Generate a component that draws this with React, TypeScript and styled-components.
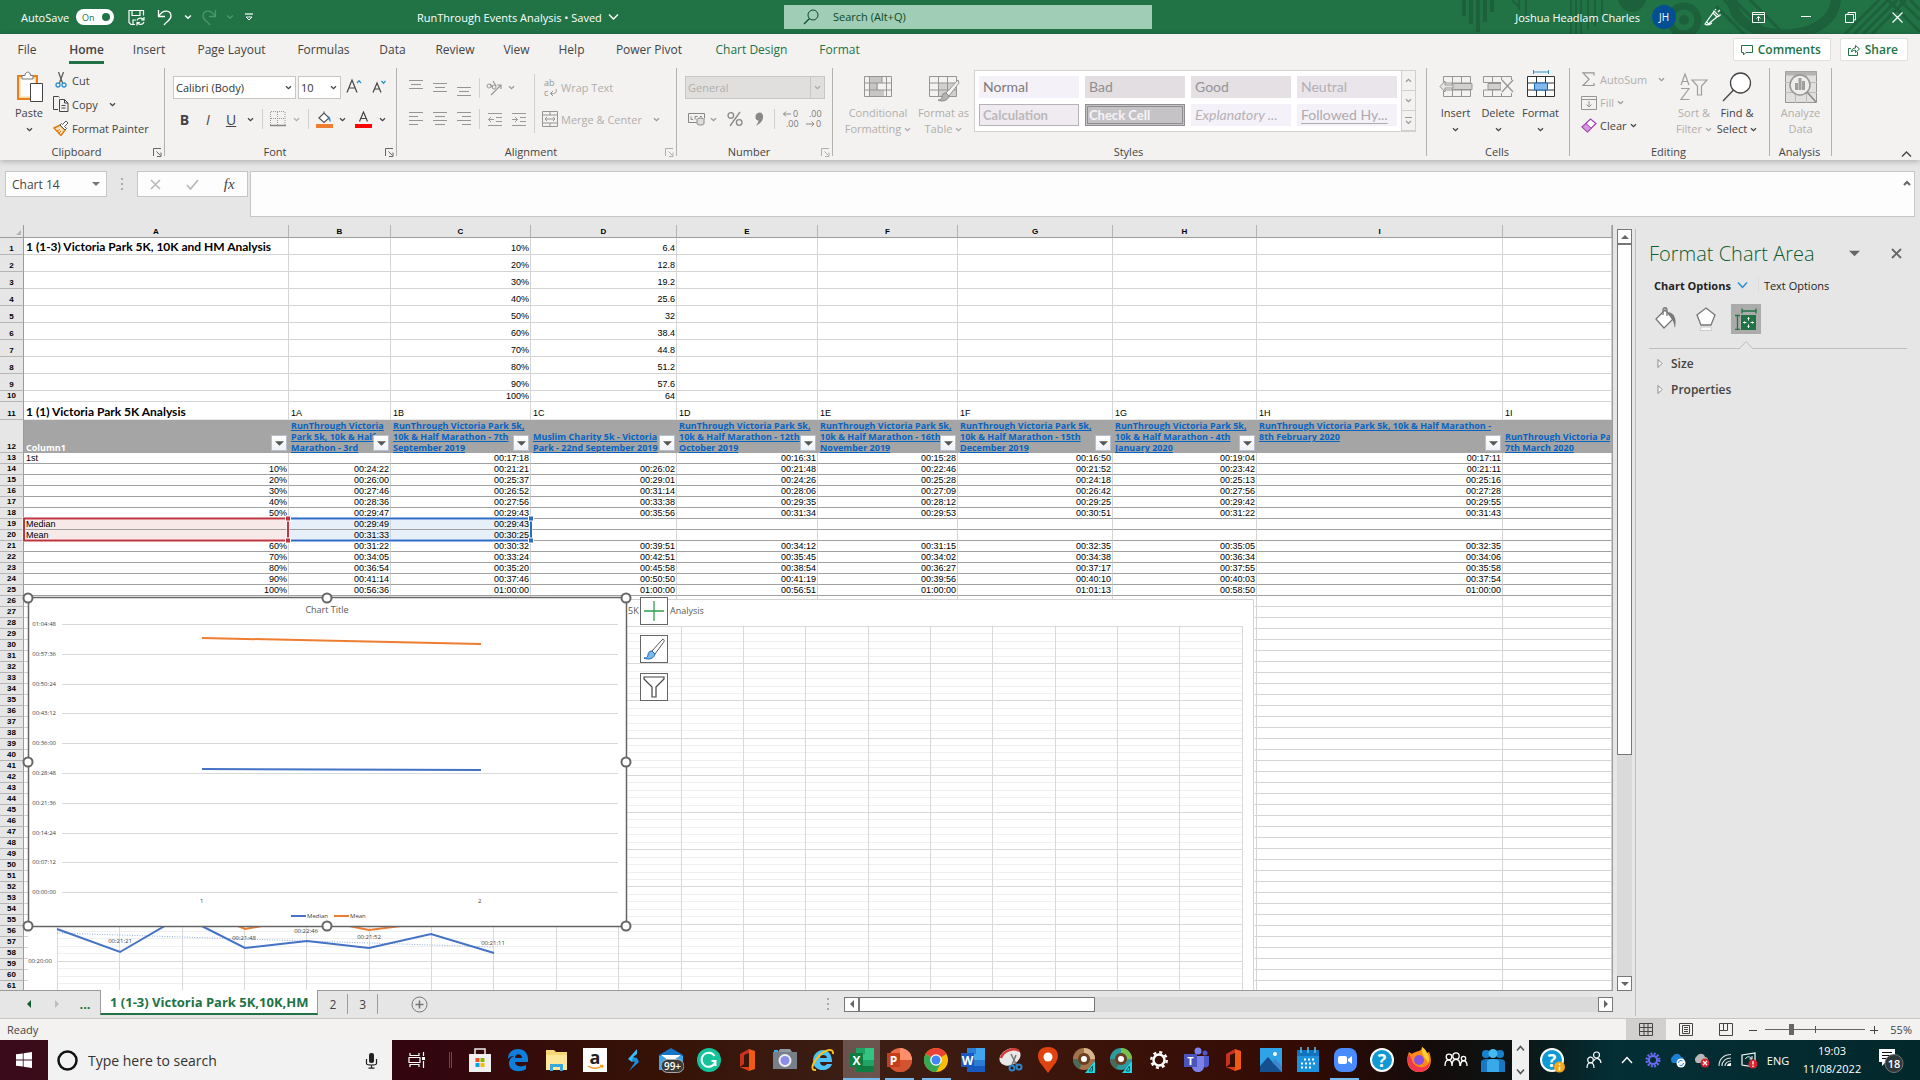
import React from "react";
import styled, { createGlobalStyle, css } from "styled-components";

/* ---------- shared values ---------- */
const ui = '"Open Sans", "Noto Sans", sans-serif';
const cellFont = '"Liberation Sans", Arial, sans-serif';
const calibri = 'Lato, "Open Sans", sans-serif';
const green = "#217346";
const ink = "#444444";
const dim = "#b1aeac";

const Global = createGlobalStyle`
  * { box-sizing: border-box; }
  body { margin: 0; background: #e6e6e6; font-family: ${ui}; font-size: 11px; color: ${ink}; }
  button { font: inherit; color: inherit; background: none; border: 0; padding: 0; margin: 0; }
  input, textarea, select { font: inherit; color: inherit; margin: 0; border-radius: 0; outline: 0; }
  svg { display: block; flex: none; }
`;

const Window = styled.div`
  display: flex;
  flex-direction: column;
  height: 100vh;
  min-width: 1280px;
  overflow: hidden;
`;

/* ---------- small drawings ---------- */
type IcoProps = { w?: number; h?: number; box?: string; children: React.ReactNode };
const Ico = ({ w = 16, h = 16, box, children }: IcoProps) => (
  <svg width={w} height={h} viewBox={box ?? `0 0 ${w} ${h}`} fill="none" aria-hidden="true">
    {children}
  </svg>
);
const Chev = ({ c = ink, w = 7 }: { c?: string; w?: number }) => (
  <Ico w={w} h={w} box="0 0 7 7">
    <path d="M1 2.2l2.5 2.4L6 2.2" stroke={c} strokeWidth="1.3" />
  </Ico>
);
const Tri = ({ dir, c = "#666", s = 8 }: { dir: "u" | "d" | "l" | "r"; c?: string; s?: number }) => {
  const d = { u: "M0 6L4 2l4 4z", d: "M0 2h8L4 6z", l: "M6 0v8L2 4z", r: "M2 0v8l4-4z" }[dir];
  return (
    <Ico w={s} h={s} box="0 0 8 8">
      <path d={d} fill={c} />
    </Ico>
  );
};

/* ---------- title bar ---------- */
const TitleBar = styled.header`
  position: relative;
  display: grid;
  grid-template-columns: 1fr 368px 1fr;
  align-items: center;
  height: 34px;
  flex: none;
  padding-left: 16px;
  background: ${green};
  color: #fff;
`;
const TitleArt = styled.div`
  position: absolute;
  right: 0;
  top: 0;
`;
const TitleLeft = styled.div`
  display: flex;
  align-items: center;
  height: 100%;
  padding-left: 5px;
`;
const AutoSave = styled.label`
  display: flex;
  align-items: center;
  gap: 7px;
  width: 107px;
`;
const Toggle = styled.span`
  display: flex;
  align-items: center;
  justify-content: space-between;
  width: 38px;
  height: 16px;
  padding: 0 4px 0 6px;
  border-radius: 8px;
  background: #fff;
  color: ${green};
  font-size: 9px;
  &::after {
    content: "";
    width: 8px;
    height: 8px;
    border-radius: 50%;
    background: ${green};
  }
`;
const HiddenCheck = styled.input`
  appearance: none;
  width: 0;
  height: 0;
  position: absolute;
`;
const QuickBtn = styled.button<{ $w: number }>`
  display: flex;
  align-items: center;
  justify-content: center;
  width: ${(p) => p.$w}px;
  height: 24px;
`;
const DocName = styled.button`
  display: flex;
  align-items: center;
  gap: 6px;
  margin: 0 auto 0 153px;
  white-space: nowrap;
`;
const SearchBox = styled.label`
  display: flex;
  align-items: center;
  height: 24px;
  margin-bottom: 1px;
  padding-left: 19px;
  gap: 14px;
  background: #9fcdb5;
  color: #0c4a26;
`;
const SearchInput = styled.input`
  flex: 1;
  min-width: 0;
  border: 0;
  padding: 0;
  background: transparent;
  &::placeholder {
    color: #0c4a26;
    opacity: 1;
  }
`;
const TitleRight = styled.div`
  position: relative;
  display: flex;
  align-items: center;
  justify-content: flex-end;
`;
const Avatar = styled.span`
  display: grid;
  place-items: center;
  width: 24px;
  height: 24px;
  margin: 0 16px 0 12px;
  border-radius: 50%;
  background: #024f94;
  font-size: 10px;
`;

/* ---------- ribbon ---------- */
const Ribbon = styled.section`
  position: relative;
  z-index: 2;
  flex: none;
  background: #f3f2f1;
  box-shadow: 0 1px 6px rgba(0, 0, 0, 0.28);
`;
const TabRow = styled.nav`
  display: flex;
  align-items: center;
  height: 34px;
  padding: 0 12px 3px 7px;
`;
const Tab = styled.button<{ $w: number; $tone?: string; $on?: boolean }>`
  width: ${(p) => p.$w}px;
  height: 28px;
  font-size: 12px;
  color: ${(p) => p.$tone ?? ink};
  font-weight: ${(p) => (p.$on ? 600 : 400)};
  white-space: nowrap;
  span {
    display: inline-block;
    padding-bottom: 1px;
    margin-top: 4px;
    border-bottom: 3px solid ${(p) => (p.$on ? green : "transparent")};
    line-height: 20px;
  }
`;
const Spacer = styled.div`
  flex: 1;
`;
const PillBtn = styled.button`
  display: flex;
  align-items: center;
  gap: 5px;
  height: 23px;
  margin-left: 9px;
  padding: 0 9px 0 7px;
  border: 1px solid #e1dfdd;
  border-radius: 2px;
  background: #fff;
  color: ${green};
  font-size: 12px;
  font-weight: 600;
`;
const Groups = styled.div`
  display: flex;
  height: 92px;
`;
const Group = styled.div<{ $w: number }>`
  display: flex;
  flex-direction: column;
  width: ${(p) => p.$w}px;
  flex: none;
`;
const GroupBody = styled.div<{ $pad?: number; $end?: number }>`
  display: flex;
  height: 76px;
  padding-left: ${(p) => p.$pad ?? 0}px;
  padding-right: ${(p) => p.$end ?? 0}px;
`;
const GroupFoot = styled.div`
  display: flex;
  align-items: center;
  height: 16px;
  padding-right: 2px;
  line-height: 16px;
  span {
    flex: 1;
    text-align: center;
  }
`;
const GroupRule = styled.div`
  width: 1px;
  height: 88px;
  flex: none;
  background: #b3b0ad;
`;
const Rows = styled.div<{ $w?: number; $pad?: number }>`
  display: grid;
  grid-template-rows: 23px 22px;
  row-gap: 9px;
  align-content: start;
  padding-top: 8px;
  padding-left: ${(p) => p.$pad ?? 0}px;
  width: ${(p) => (p.$w ? `${p.$w}px` : "auto")};
`;
const Line = styled.div`
  display: flex;
  align-items: center;
`;
const Tool = styled.button<{ $w: number }>`
  display: flex;
  align-items: center;
  justify-content: center;
  width: ${(p) => p.$w}px;
  height: 22px;
  font-size: 14px;
`;
const Sep = styled.span<{ $w: number }>`
  display: flex;
  justify-content: center;
  width: ${(p) => p.$w}px;
  &::after {
    content: "";
    width: 1px;
    height: 20px;
    background: #d2d0ce;
  }
`;
const TallSep = styled.span`
  width: 1px;
  height: 59px;
  margin-top: 6px;
  background: #d2d0ce;
`;
const LargeBtn = styled.button<{ $w: number; $off?: boolean }>`
  display: flex;
  flex-direction: column;
  align-items: center;
  width: ${(p) => p.$w}px;
  flex: none;
  color: ${(p) => (p.$off ? dim : ink)};
  line-height: 16px;
  white-space: nowrap;
`;
const LargeIcon = styled.span`
  display: grid;
  place-items: center;
  height: 37px;
`;
const Caption = styled.span`
  display: flex;
  align-items: center;
  gap: 3px;
  min-height: 16px;
`;
const SmallStack = styled.div<{ $row: number; $gap: number }>`
  display: grid;
  grid-auto-rows: ${(p) => p.$row}px;
  margin-left: ${(p) => p.$gap}px;
`;
const SmallBtn = styled.button<{ $off?: boolean }>`
  display: flex;
  align-items: center;
  gap: 3px;
  color: ${(p) => (p.$off ? dim : ink)};
  white-space: nowrap;
`;
const ChevPad = styled.span`
  padding-left: 8px;
`;
const PickerPair = styled.div`
  display: flex;
  gap: 2px;
`;
const Picker = styled.label<{ $w: number; $off?: boolean }>`
  display: grid;
  align-items: center;
  width: ${(p) => p.$w}px;
  height: 23px;
  border: 1px solid #c8c6c4;
  background: ${(p) => (p.$off ? "#e1dfdd" : "#fff")};
  color: ${(p) => (p.$off ? dim : "#333")};
  > * {
    grid-area: 1 / 1;
  }
`;
const PickerSelect = styled.select`
  appearance: none;
  width: 100%;
  height: 21px;
  border: 0;
  padding: 0 2px;
  background: transparent;
`;
const PickerArrow = styled.span<{ $line?: boolean }>`
  display: grid;
  place-items: center;
  justify-self: end;
  width: 14px;
  height: 21px;
  pointer-events: none;
  border-left: 1px solid ${(p) => (p.$line ? "#c8c6c4" : "transparent")};
`;
const Gallery = styled.div`
  display: flex;
  height: 62px;
  margin-top: 2px;
  border: 1px solid #d2d0ce;
  background: #fff;
`;
const GalleryGrid = styled.div`
  display: grid;
  grid-template-columns: repeat(4, 100px);
  grid-template-rows: 22px 22px;
  gap: 6px;
  padding: 5px 4px;
`;
type StyleKind = "plain" | "calc" | "check" | "note" | "link";
const StyleCell = styled.button<{ $bg: string; $c: string; $kind: StyleKind }>`
  padding: 0 4px;
  background: ${(p) => p.$bg};
  color: ${(p) => p.$c};
  font-family: ${calibri};
  font-size: 14px;
  line-height: 16px;
  text-align: left;
  white-space: nowrap;
  ${(p) => p.$kind === "calc" && css`border: 1px solid #b5b2b5; padding: 0 3px; font-weight: 700; font-size: 13px;`}
  ${(p) => p.$kind === "check" && css`border: 3px double #8f8d8f; padding: 0 1px; font-weight: 700; font-size: 13px;`}
  ${(p) => p.$kind === "note" && css`font-style: italic;`}
  ${(p) => p.$kind === "link" && css`text-decoration: underline; text-underline-offset: 3px;`}
`;
const GallerySide = styled.div`
  display: grid;
  grid-template-rows: repeat(3, 1fr);
  width: 14px;
  background: #f3f2f1;
  border-left: 1px solid #d2d0ce;
  button {
    display: grid;
    place-items: center;
    border-bottom: 1px solid #d2d0ce;
  }
`;
const Collapse = styled.button`
  align-self: flex-end;
  margin: 0 8px 2px 0;
`;

const Launcher = ({ c = "#666" }: { c?: string }) => (
  <Ico w={9} h={9}>
    <path d="M.5 8V.5H8M3.5 3.5l4 4M8 4.500V8.500H4" stroke={c} />
  </Ico>
);
const Lines = ({ rows, c = "#979593" }: { rows: [number, number, number][]; c?: string }) => (
  <Ico w={16} h={18}>
    {rows.map(([x, y, w]) => (
      <path key={y} d={`M${x} ${y}.5h${w}`} stroke={c} />
    ))}
  </Ico>
);
const gridPath = "M1.500 1.500h27v20h-27zM1.500 8h27M1.500 15h27M10.500 1.500v20M19.500 1.500v20";

function RibbonBar() {
  const tabs: [string, number][] = [
    ["File", 40], ["Home", 79], ["Insert", 46], ["Page Layout", 119], ["Formulas", 65], ["Data", 73],
    ["Review", 52], ["View", 71], ["Help", 39], ["Power Pivot", 116], ["Chart Design", 89], ["Format", 87],
  ];
  return (
    <Ribbon aria-label="Ribbon">
      <TabRow>
        {tabs.map(([t, w]) => (
          <Tab key={t} $w={w} $on={t === "Home"} $tone={t === "Chart Design" || t === "Format" ? green : undefined}>
            <span>{t}</span>
          </Tab>
        ))}
        <Spacer />
        <PillBtn>
          <Ico w={12} h={12}>
            <path d="M.5 1.500h11v7H5l-2.500 2.500V8.500h-2z" stroke={green} />
          </Ico>
          Comments
        </PillBtn>
        <PillBtn>
          <Ico w={12} h={12}>
            <path d="M3 4.500H.5v7h9V8M3.500 8c0-3 2-4 4-4V1.500l4 3.500-4 3.500V6.200c-2 0-3 .5-4 1.800z" stroke={green} />
          </Ico>
          Share
        </PillBtn>
      </TabRow>
      <Groups>
        <Group $w={164}>
          <GroupBody $pad={12}>
            <LargeBtn $w={34}>
              <LargeIcon>
                <Ico w={30} h={32}>
                  <path d="M4 5h19v23H4z" fill="#fbd9a0" stroke="#e8811c" strokeWidth="2" />
                  <path d="M6.500 7.500h14v18h-14z" fill="#fdfdfd" />
                  <path d="M8 8V4.500h3C11 0 16.500 0 16.500 4.500H19V8z" fill="#fff" stroke="#777" />
                  <path d="M16.500 12.500h12v18h-12z" fill="#fff" stroke="#444" />
                </Ico>
              </LargeIcon>
              <Caption>Paste</Caption>
              <Caption><Chev /></Caption>
            </LargeBtn>
            <SmallStack $row={24} $gap={7}>
              <SmallBtn>
                <Ico>
                  <path d="M5.500 0l4 11M10.500 0l-4 11" stroke="#555" strokeWidth="1.200" />
                  <circle cx="5" cy="13" r="2" stroke="#2c8fd0" strokeWidth="1.300" />
                  <circle cx="11" cy="13" r="2" stroke="#2c8fd0" strokeWidth="1.300" />
                </Ico>
                Cut
              </SmallBtn>
              <SmallBtn>
                <Ico>
                  <path d="M5 13.500H.5v-13h5l1 1M6.500 3.500h5l3.500 3.500v8.500H6.500zM11.500 3.500V7H15M8.500 9.500h4M8.500 12h4" stroke="#444" />
                </Ico>
                Copy<ChevPad><Chev /></ChevPad>
              </SmallBtn>
              <SmallBtn>
                <Ico>
                  <path d="M1 8l6-3 5 5-4 5.500z" fill="#fce2b4" stroke="#e07a10" strokeWidth="1.400" />
                  <path d="M4 11l3-1.500M6 13l2-2" stroke="#e07a10" />
                  <path d="M7 5l5 5 1.500-1.500-2-2L15 3l-2-2-3.500 3.500-1-1z" fill="#fff" stroke="#555" />
                </Ico>
                Format Painter
              </SmallBtn>
            </SmallStack>
          </GroupBody>
          <GroupFoot><span>Clipboard</span><Launcher /></GroupFoot>
        </Group>
        <GroupRule />
        <Group $w={231}>
          <GroupBody $pad={1}>
            <Rows $pad={7}>
              <Line>
                <PickerPair>
                  <Picker $w={123}>
                    <PickerSelect defaultValue="c" aria-label="Font name"><option value="c">Calibri (Body)</option></PickerSelect>
                    <PickerArrow><Chev /></PickerArrow>
                  </Picker>
                  <Picker $w={43}>
                    <PickerSelect defaultValue="10" aria-label="Font size"><option value="10">10</option></PickerSelect>
                    <PickerArrow><Chev /></PickerArrow>
                  </Picker>
                </PickerPair>
                <Tool $w={26} aria-label="Increase font size">
                  <Ico w={16} h={20}>
                    <path d="M1 14.500L6 2l5 12.500M2.800 10h6.400" stroke="#444" strokeWidth="1.200" />
                    <path d="M11 5l2-2.200L15 5" stroke="#2c8fd0" strokeWidth="1.300" />
                  </Ico>
                </Tool>
                <Tool $w={24} aria-label="Decrease font size">
                  <Ico w={14} h={20}>
                    <path d="M1 14.500L5 5l4 9.500M2.500 11h5" stroke="#444" strokeWidth="1.200" />
                    <path d="M9.500 3l2 2.200L13.500 3" stroke="#2c8fd0" strokeWidth="1.300" />
                  </Ico>
                </Tool>
              </Line>
              <Line>
                <Tool $w={23} aria-label="Bold"><b>B</b></Tool>
                <Tool $w={24} aria-label="Italic"><i>I</i></Tool>
                <Tool $w={22} aria-label="Underline"><u>U</u></Tool>
                <Tool $w={16} aria-label="Underline options"><Chev /></Tool>
                <Sep $w={8} />
                <Tool $w={24} aria-label="Borders">
                  <Ico>
                    <path d="M.5 1v13M7.500 1v13M15 1v13M1 .5h14M1 7.500h14" stroke="#999" strokeDasharray="1 1" />
                    <path d="M0 14.500h16" stroke="#888" strokeWidth="1.500" />
                  </Ico>
                </Tool>
                <Tool $w={12} aria-label="Border options"><Chev c={dim} /></Tool>
                <Sep $w={12} />
                <Tool $w={20} aria-label="Fill color">
                  <Ico w={17} h={17}>
                    <path d="M3 7l5-5 5 5-5 4.500zM8 2V.5" fill="#fff" stroke="#555" strokeWidth="1.200" />
                    <path d="M12 5c2 .5 3 3 2.500 6-1-.5-2-2-2-4z" fill="#2c8fd0" />
                    <path d="M0 13h17v4H0z" fill="#ed7d31" />
                  </Ico>
                </Tool>
                <Tool $w={16} aria-label="Fill options"><Chev /></Tool>
                <Tool $w={26} aria-label="Font color">
                  <Ico w={17} h={17}>
                    <path d="M4.500 10.500L8.500 1l4 9.500M6 7.500h5" stroke="#444" strokeWidth="1.200" />
                    <path d="M0 13h17v4H0z" fill="#fb0505" />
                  </Ico>
                </Tool>
                <Tool $w={12} aria-label="Font color options"><Chev /></Tool>
              </Line>
            </Rows>
          </GroupBody>
          <GroupFoot><span>Font</span><Launcher /></GroupFoot>
        </Group>
        <GroupRule />
        <Group $w={279}>
          <GroupBody $pad={7}>
            <Rows $w={130}>
              <Line>
                <Tool $w={24} aria-label="Top align"><Lines rows={[[1, 1, 14], [3, 5, 10], [1, 9, 14]]} /></Tool>
                <Tool $w={24} aria-label="Middle align"><Lines rows={[[1, 4, 14], [3, 8, 10], [1, 12, 14]]} /></Tool>
                <Tool $w={24} aria-label="Bottom align"><Lines rows={[[1, 8, 14], [3, 12, 10], [1, 16, 14]]} /></Tool>
                <Sep $w={6} />
                <Tool $w={24} aria-label="Orientation">
                  <Ico>
                    <circle cx="3" cy="6" r="2" stroke="#999" />
                    <circle cx="8" cy="7" r="2" stroke="#999" />
                    <path d="M4 4l3 3.500M7 1l3 5M5 15L15 5M11 5h4v4" stroke="#999" strokeWidth="1.200" />
                  </Ico>
                </Tool>
                <Tool $w={10} aria-label="Orientation options"><Chev c="#999" /></Tool>
              </Line>
              <Line>
                <Tool $w={24} aria-label="Align left"><Lines rows={[[1, 2, 14], [1, 6, 9], [1, 10, 14], [1, 14, 9]]} /></Tool>
                <Tool $w={24} aria-label="Center"><Lines rows={[[1, 2, 14], [3, 6, 10], [1, 10, 14], [3, 14, 10]]} /></Tool>
                <Tool $w={24} aria-label="Align right"><Lines rows={[[1, 2, 14], [6, 6, 9], [1, 10, 14], [6, 14, 9]]} /></Tool>
                <Sep $w={6} />
                <Tool $w={26} aria-label="Decrease indent">
                  <Ico h={15}>
                    <path d="M1 1.500h14M9 5.500h6M9 9.500h6M1 13.500h14M7 7.500H1.500M4 5L1.500 7.500 4 10" stroke="#999" />
                  </Ico>
                </Tool>
                <Tool $w={22} aria-label="Increase indent">
                  <Ico h={15}>
                    <path d="M1 1.500h14M9 5.500h6M9 9.500h6M1 13.500h14M1 7.500h5.500M4 5l2.500 2.500L4 10" stroke="#999" />
                  </Ico>
                </Tool>
              </Line>
            </Rows>
            <TallSep />
            <Rows $pad={7}>
              <SmallBtn $off>
                <Ico h={22}>
                  <text x="2" y="9" fontSize="9" fill="#979593" fontFamily="Open Sans">ab</text>
                  <text x="2" y="19" fontSize="9" fill="#979593" fontFamily="Open Sans">c</text>
                  <path d="M14 12c1 4-1 5-5 4.500M11 14l-2.500 2.500L11 19" stroke="#979593" />
                </Ico>
                Wrap Text
              </SmallBtn>
              <SmallBtn $off>
                <Ico>
                  <path d="M.5.5h15v15H.5zM.5 4h15M.5 12h15M8 .5V4M8 12v3.500M3 8h10M5 6L3 8l2 2M11 6l2 2-2 2" stroke="#979593" />
                </Ico>
                Merge &amp; Center<ChevPad><Chev c="#999" /></ChevPad>
              </SmallBtn>
            </Rows>
          </GroupBody>
          <GroupFoot><span>Alignment</span><Launcher c="#b0aeac" /></GroupFoot>
        </Group>
        <GroupRule />
        <Group $w={155}>
          <GroupBody $pad={8}>
            <Rows>
              <Line>
                <Picker $w={140} $off>
                  <PickerSelect defaultValue="g" aria-label="Number format"><option value="g">General</option></PickerSelect>
                  <PickerArrow $line><Chev c="#aaa" /></PickerArrow>
                </Picker>
              </Line>
              <Line>
                <Tool $w={22} aria-label="Accounting format">
                  <Ico w={17} h={14}>
                    <path d="M.5 1.500h16v5M.5 1.500v9h8M3 4.500v3h2M7 7.500v-3h2.500M12 4.500h2" stroke="#8a8886" />
                    <ellipse cx="12.500" cy="7.500" rx="3.500" ry="1.500" fill="#ddd" stroke="#8a8886" />
                    <path d="M9 7.500v4c0 2 7 2 7 0v-4" fill="#ddd" stroke="#8a8886" />
                  </Ico>
                </Tool>
                <Tool $w={12} aria-label="Accounting options"><Chev c="#999" /></Tool>
                <Tool $w={32} aria-label="Percent style">
                  <Ico>
                    <circle cx="3.800" cy="4.500" r="2.800" stroke="#8a8886" strokeWidth="1.300" />
                    <circle cx="12.200" cy="11.500" r="2.800" stroke="#8a8886" strokeWidth="1.300" />
                    <path d="M13 1L3 15" stroke="#8a8886" strokeWidth="1.300" />
                  </Ico>
                </Tool>
                <Tool $w={16} aria-label="Comma style">
                  <Ico w={9} h={14}>
                    <path d="M4.500.5c5 0 5.500 9-3 13-.8-.4 2-2.500 2-5C-1 8.500-.5.5 4.500.5z" fill="#8a8886" />
                  </Ico>
                </Tool>
                <Sep $w={14} />
                <Tool $w={18} aria-label="Increase decimal">
                  <Ico w={17} h={22}>
                    <text x="11" y="9" fontSize="9" fill="#7c7a78" fontFamily="Open Sans">0</text>
                    <text x="4" y="19" fontSize="9" fill="#7c7a78" fontFamily="Open Sans">.00</text>
                    <path d="M9 6H1.500M4 3.500L1.500 6 4 8.500" stroke="#8a8886" />
                  </Ico>
                </Tool>
                <Tool $w={29} aria-label="Decrease decimal">
                  <Ico w={17} h={22}>
                    <text x="4" y="9" fontSize="9" fill="#7c7a78" fontFamily="Open Sans">.00</text>
                    <text x="11" y="19" fontSize="9" fill="#7c7a78" fontFamily="Open Sans">0</text>
                    <path d="M1 16h8M6.500 13.500L9 16l-2.500 2.500" stroke="#8a8886" />
                  </Ico>
                </Tool>
              </Line>
            </Rows>
          </GroupBody>
          <GroupFoot><span>Number</span><Launcher c="#b0aeac" /></GroupFoot>
        </Group>
        <GroupRule />
        <Group $w={593}>
          <GroupBody $pad={10}>
            <LargeBtn $w={70} $off>
              <LargeIcon>
                <Ico w={30} h={23}>
                  <path d="M6 1.500h13V8H6zM6 8h9v7H6zM6 15h15v6.500H6z" fill="#c8c6c4" />
                  <path d="M1.500 1.500h27v20h-27zM1.500 8h27M1.500 15h27M6.500 1.500v20M23.500 1.500v20M19 1.500V8M14 8v7" stroke="#979593" />
                </Ico>
              </LargeIcon>
              <Caption>Conditional</Caption>
              <Caption>Formatting<Chev c="#aaa" /></Caption>
            </LargeBtn>
            <LargeBtn $w={61} $off>
              <LargeIcon>
                <Ico w={32} h={30}>
                  <g transform="translate(0 3)">
                    <path d="M10.500 8h18v13.500h-18z" fill="#d2d0ce" />
                    <path d={gridPath} stroke="#979593" />
                  </g>
                  <path d="M30 8L18 21l3 3L31 11z" fill="#f3f2f1" stroke="#979593" />
                  <path d="M18 21c-3 0-4 2-4 4s-2 3-4 3c4 2 10 1 11-4z" fill="#b5b3b1" stroke="#8a8886" />
                </Ico>
              </LargeIcon>
              <Caption>Format as</Caption>
              <Caption>Table<Chev c="#aaa" /></Caption>
            </LargeBtn>
            <Gallery>
              <GalleryGrid>
                <StyleCell $bg="#f5f1f8" $c="#7c7a7c" $kind="plain">Normal</StyleCell>
                <StyleCell $bg="#e2dee2" $c="#908e90" $kind="plain">Bad</StyleCell>
                <StyleCell $bg="#e4e0e4" $c="#969496" $kind="plain">Good</StyleCell>
                <StyleCell $bg="#e9e5eb" $c="#b2afb3" $kind="plain">Neutral</StyleCell>
                <StyleCell $bg="#efebf1" $c="#bbb8bb" $kind="calc">Calculation</StyleCell>
                <StyleCell $bg="#c6c3c7" $c="#f6f3f7" $kind="check">Check Cell</StyleCell>
                <StyleCell $bg="#f5f1f8" $c="#b5b2b6" $kind="note">Explanatory ...</StyleCell>
                <StyleCell $bg="#f5f1f8" $c="#adaaae" $kind="link">Followed Hy...</StyleCell>
              </GalleryGrid>
              <GallerySide>
                <button aria-label="Previous styles">
                  <Ico w={7} h={7}><path d="M1 4.800l2.500-2.400L6 4.800" stroke="#999" strokeWidth="1.300" /></Ico>
                </button>
                <button aria-label="Next styles"><Chev c="#999" /></button>
                <button aria-label="More styles">
                  <Ico w={7} h={8}><path d="M0 .5h7M1 4l2.500 2.400L6 4" stroke="#999" strokeWidth="1.200" /></Ico>
                </button>
              </GallerySide>
            </Gallery>
          </GroupBody>
          <GroupFoot><span>Styles</span></GroupFoot>
        </Group>
        <GroupRule />
        <Group $w={142}>
          <GroupBody $pad={7}>
            <LargeBtn $w={43}>
              <LargeIcon>
                <Ico w={34} h={23}>
                  <g transform="translate(3 0)"><path d={gridPath} stroke="#979593" /></g>
                  <path d="M13 8.500h20v6H13z" fill="#d2d0ce" stroke="#979593" />
                  <path d="M14 10v3H6v4l-5-5.500L6 6v4z" fill="#e8e6e4" stroke="#979593" />
                </Ico>
              </LargeIcon>
              <Caption>Insert</Caption>
              <Caption><Chev /></Caption>
            </LargeBtn>
            <LargeBtn $w={42}>
              <LargeIcon>
                <Ico w={32} h={23}>
                  <path d="M1.500 1.500h28v6h-28zM1.500 15h28v6.500h-28zM10.500 1.500v20M19.500 1.500v20" stroke="#979593" />
                  <path d="M6 8.500h13v6H6z" fill="#d2d0ce" stroke="#979593" />
                  <path d="M19 5h12v13H19z" fill="#f3f2f1" />
                  <path d="M20 5l11 12M31 5L20 17" stroke="#979593" strokeWidth="1.300" />
                </Ico>
              </LargeIcon>
              <Caption>Delete</Caption>
              <Caption><Chev /></Caption>
            </LargeBtn>
            <LargeBtn $w={43}>
              <LargeIcon>
                <Ico w={30} h={34}>
                  <path d="M7.500 0v4M22.500 0v4M7.500 2h15" stroke="#2c8fd0" />
                  <g transform="translate(0 5)">
                    <path d={gridPath} stroke="#333" fill="#fff" />
                    <path d="M8.500 8h13v7h-13z" fill="#83b9ea" stroke="#1a6ab5" />
                  </g>
                </Ico>
              </LargeIcon>
              <Caption>Format</Caption>
              <Caption><Chev /></Caption>
            </LargeBtn>
          </GroupBody>
          <GroupFoot><span>Cells</span></GroupFoot>
        </Group>
        <GroupRule />
        <Group $w={199}>
          <GroupBody $end={9}>
            <SmallStack $row={23} $gap={11}>
              <SmallBtn $off>
                <Ico w={16} h={15}><path d="M13 3.500V.8H2l6 6.500-6 6.200h11V11" stroke="#979593" strokeWidth="1.200" /></Ico>
                AutoSum<ChevPad><Chev c="#999" /></ChevPad>
              </SmallBtn>
              <SmallBtn $off>
                <Ico w={16} h={14}><path d="M.5.500h15v13H.5zM.5 3.500h15M8 5v6M5.500 8.500L8 11l2.500-2.500" stroke="#979593" /></Ico>
                Fill<Chev c="#999" />
              </SmallBtn>
              <SmallBtn>
                <Ico w={16} h={15}>
                  <path d="M1 9L9.500 1 15 5.500 6.500 14z" fill="#fff" stroke="#a33bb0" strokeWidth="1.200" />
                  <path d="M1 9l4-3.500 5.300 4.800L6.500 14z" fill="#d49bdc" stroke="#a33bb0" />
                </Ico>
                Clear<Chev />
              </SmallBtn>
            </SmallStack>
            <Spacer />
            <LargeBtn $w={40} $off>
              <LargeIcon>
                <Ico w={30} h={30}>
                  <path d="M2 13L6 2l4 11M3.500 9.500h5M2 16.500h8L2 27.500h8.500" stroke="#a19f9d" strokeWidth="1.200" />
                  <path d="M13 8h15l-5.500 6v9h-4v-9z" stroke="#a19f9d" strokeWidth="1.200" />
                </Ico>
              </LargeIcon>
              <Caption>Sort &amp;</Caption>
              <Caption>Filter<Chev c="#aaa" /></Caption>
            </LargeBtn>
            <LargeBtn $w={46}>
              <LargeIcon>
                <Ico w={30} h={30}>
                  <circle cx="18.500" cy="11" r="10" fill="#fff" stroke="#444" strokeWidth="1.300" />
                  <path d="M11.500 18L1 29" stroke="#444" strokeWidth="1.300" />
                </Ico>
              </LargeIcon>
              <Caption>Find &amp;</Caption>
              <Caption>Select<Chev /></Caption>
            </LargeBtn>
          </GroupBody>
          <GroupFoot><span>Editing</span></GroupFoot>
        </Group>
        <GroupRule />
        <Group $w={61}>
          <GroupBody>
            <LargeBtn $w={61} $off>
              <LargeIcon>
                <Ico w={32} h={32}>
                  <path d="M.5.500h31v31H.5z" fill="#e1dfdd" stroke="#979593" />
                  <path d="M.5.500h31v4H.5z" fill="#b5b3b1" />
                  <path d="M0 11.500h32M0 21.500h32M10.500 4v28M21.500 4v28" stroke="#bbb" />
                  <circle cx="15" cy="14" r="10" fill="#efedeb" stroke="#979593" strokeWidth="1.500" />
                  <path d="M10 12h3v7h-3zM13.500 7h3v12h-3zM17 10h3v9h-3z" fill="#a19f9d" />
                  <path d="M22 21l9 10" stroke="#8a8886" strokeWidth="1.500" />
                </Ico>
              </LargeIcon>
              <Caption>Analyze</Caption>
              <Caption>Data</Caption>
            </LargeBtn>
          </GroupBody>
          <GroupFoot><span>Analysis</span></GroupFoot>
        </Group>
        <GroupRule />
        <Spacer />
        <Collapse aria-label="Collapse ribbon">
          <Ico w={11} h={8}><path d="M1 6.500l4.500-4.500L10 6.500" stroke="#444" strokeWidth="1.300" /></Ico>
        </Collapse>
      </Groups>
    </Ribbon>
  );
}

/* ---------- formula bar ---------- */
const FormulaRow = styled.div`
  display: flex;
  align-items: flex-start;
  flex: none;
  height: 65px;
  padding: 11px 5px 0 5px;
`;
const NameBox = styled.label`
  display: flex;
  align-items: center;
  width: 102px;
  height: 26px;
  padding: 0 6px;
  border: 1px solid #c8c6c4;
  background: #fdfdfd;
  input {
    width: 80px;
    border: 0;
    padding: 0;
    background: transparent;
    font-size: 12px;
  }
`;
const Dots = styled.span<{ $w: number }>`
  display: grid;
  place-items: center;
  width: ${(p) => p.$w}px;
  height: 26px;
`;
const FxBox = styled.div`
  display: flex;
  align-items: center;
  justify-content: space-around;
  width: 111px;
  height: 26px;
  margin-right: 2px;
  border: 1px solid #c8c6c4;
  background: #fdfdfd;
  font-family: "Liberation Serif", serif;
  font-size: 15px;
  font-style: italic;
`;
const FormulaField = styled.div`
  display: flex;
  flex: 1;
  height: 46px;
  border: 1px solid #c8c6c4;
  background: #fdfdfd;
  textarea {
    flex: 1;
    border: 0;
    resize: none;
    background: transparent;
  }
  button {
    align-self: flex-start;
    padding: 8px 3px;
  }
`;

/* ---------- work area ---------- */
const Work = styled.main`
  display: flex;
  flex: 1;
  min-height: 0;
`;
const SheetSide = styled.div`
  display: flex;
  flex-direction: column;
  flex: 1;
  min-width: 0;
`;
const SheetRow = styled.div`
  display: flex;
  flex: 1;
  min-height: 0;
`;
const GridView = styled.div`
  position: relative;
  flex: 1;
  min-width: 0;
  overflow: hidden;
  border-bottom: 1px solid #9b9b9b;
  border-right: 1px solid #9b9b9b;
`;
const Sheet = styled.table`
  width: 100%;
  table-layout: fixed;
  border-collapse: separate;
  border-spacing: 0;
  font-family: ${cellFont};
  font-size: 9px;
  color: #000;
  background: #fff;
`;
const ColHead = styled.th`
  height: 13px;
  padding: 2px 0 0;
  background: #e6e6e6;
  border-right: 1px solid #b5b5b5;
  border-bottom: 1px solid #9b9b9b;
  font-size: 8px;
  line-height: 10px;
  font-weight: 700;
`;
const Corner = styled(ColHead)`
  border-right-color: #9b9b9b;
  svg {
    margin-left: 16px;
  }
`;
/* tall rows keep one pixel free under the text, 11px rows have none to spare */
const restingLine = css<{ $tight: boolean }>`
  padding-bottom: ${(p) => (p.$tight ? 0 : 1)}px;
  line-height: ${(p) => (p.$tight ? 10 : 9)}px;
  vertical-align: bottom;
`;
const RowHead = styled.th<{ $h: number; $tight: boolean }>`
  height: ${(p) => p.$h}px;
  padding: 0;
  ${restingLine}
  background: #e6e6e6;
  border-right: 1px solid #9b9b9b;
  border-bottom: 1px solid #b5b5b5;
  font-size: 8px;
  font-weight: 700;
`;
type CellKind = "right" | "left" | "title" | "head";
const Cell = styled.td<{ $kind: CellKind; $line: string; $fill?: string; $tight: boolean }>`
  padding: 0 1px 0 2px;
  ${restingLine}
  border-right: 1px solid ${(p) => (p.$kind === "head" ? "#a5a5a5" : "#d4d4d4")};
  border-bottom: 1px solid ${(p) => p.$line};
  background: ${(p) => p.$fill ?? "#fff"};
  text-align: ${(p) => (p.$kind === "right" ? "right" : "left")};
  white-space: nowrap;
  overflow: hidden;
  ${(p) => p.$kind === "head" && css`border-bottom: 0; padding-bottom: 0;`}
  ${(p) => p.$kind === "title" && css`padding-bottom: 0; font-family: ${calibri}; font-size: 12px; font-weight: 700; line-height: 15px;`}
`;
const HeadInner = styled.div<{ $top?: boolean }>`
  display: grid;
  height: 33px;
  font-family: ${ui};
  line-height: 11px;
  font-weight: 700;
  > * {
    grid-area: 1 / 1;
    min-width: 0;
  }
  > a,
  > span {
    align-self: ${(p) => (p.$top ? "start" : "end")};
    color: #0563c1;
    white-space: pre;
    overflow: hidden;
  }
  > span {
    color: #fff;
  }
`;
const FilterBtn = styled.button`
  align-self: end;
  justify-self: end;
  display: grid;
  place-items: center;
  width: 16px;
  height: 16px;
  margin-bottom: 2px;
  border: 1px solid #b9c0cb;
  background: linear-gradient(#fff, #eef1f6);
`;

const columns = [
  ["A", 265], ["B", 102], ["C", 140], ["D", 146], ["E", 141], ["F", 140], ["G", 155], ["H", 144], ["I", 246], ["", 0],
] as [string, number][];
const pct = ["10%", "20%", "30%", "40%", "50%", "60%", "70%", "80%", "90%", "100%"];
const share = ["6.4", "12.8", "19.2", "25.6", "32", "38.4", "44.8", "51.2", "57.6", "64"];
const heads: string[] = [
  "Column1",
  "RunThrough Victoria\nPark 5k, 10k & Half\nMarathon - 3rd",
  "RunThrough Victoria Park 5k,\n10k & Half Marathon - 7th\nSeptember 2019",
  "Muslim Charity 5k - Victoria\nPark - 22nd September 2019",
  "RunThrough Victoria Park 5k,\n10k & Half Marathon - 12th\nOctober 2019",
  "RunThrough Victoria Park 5k,\n10k & Half Marathon - 16th\nNovember 2019",
  "RunThrough Victoria Park 5k,\n10k & Half Marathon - 15th\nDecember 2019",
  "RunThrough Victoria Park 5k,\n10k & Half Marathon - 4th\nJanuary 2020",
  "RunThrough Victoria Park 5k, 10k & Half Marathon -\n8th February 2020",
  "RunThrough Victoria Park 5k,\n7th March 2020",
];
const times: string[][] = [
  ["1st", "", "00:17:18", "", "00:16:31", "00:15:28", "00:16:50", "00:19:04", "00:17:11"],
  ["10%", "00:24:22", "00:21:21", "00:26:02", "00:21:48", "00:22:46", "00:21:52", "00:23:42", "00:21:11"],
  ["20%", "00:26:00", "00:25:37", "00:29:01", "00:24:26", "00:25:28", "00:24:18", "00:25:13", "00:25:16"],
  ["30%", "00:27:46", "00:26:52", "00:31:14", "00:28:06", "00:27:09", "00:26:42", "00:27:56", "00:27:28"],
  ["40%", "00:28:36", "00:27:56", "00:33:38", "00:29:35", "00:28:12", "00:29:25", "00:29:42", "00:29:55"],
  ["50%", "00:29:47", "00:29:43", "00:35:56", "00:31:34", "00:29:53", "00:30:51", "00:31:22", "00:31:43"],
  ["Median", "00:29:49", "00:29:43"],
  ["Mean", "00:31:33", "00:30:25"],
  ["60%", "00:31:22", "00:30:32", "00:39:51", "00:34:12", "00:31:15", "00:32:35", "00:35:05", "00:32:35"],
  ["70%", "00:34:05", "00:33:24", "00:42:51", "00:35:45", "00:34:02", "00:34:38", "00:36:34", "00:34:06"],
  ["80%", "00:36:54", "00:35:20", "00:45:58", "00:38:54", "00:36:27", "00:37:17", "00:37:55", "00:35:58"],
  ["90%", "00:41:14", "00:37:46", "00:50:50", "00:41:19", "00:39:56", "00:40:10", "00:40:03", "00:37:54"],
  ["100%", "00:56:36", "01:00:00", "01:00:00", "00:56:51", "01:00:00", "01:01:13", "00:58:50", "01:00:00"],
];

function cellsOf(n: number): string[] {
  if (n === 1) return ["1 (1-3) Victoria Park 5K, 10K and HM Analysis", "", pct[0], share[0]];
  if (n <= 10) return ["", "", pct[n - 1], share[n - 1]];
  if (n === 11) return ["1 (1) Victoria Park 5K Analysis", "1A", "1B", "1C", "1D", "1E", "1F", "1G", "1H", "1I"];
  if (n >= 13 && n <= 25) return times[n - 13];
  return [];
}
function heightOf(n: number) {
  if (n <= 9) return 17;
  if (n === 11) return 18;
  return n === 12 ? 33 : 11;
}

function SheetTable() {
  const rows = Array.from({ length: 61 }, (_, i) => i + 1);
  return (
    <Sheet>
      <colgroup>
        <col style={{ width: 24 }} />
        {columns.map(([n, w], i) => (
          <col key={n || i} style={w ? { width: w } : undefined} />
        ))}
      </colgroup>
      <thead>
        <tr>
          <Corner aria-label="Select all">
            <Ico w={5} h={5}><path d="M5 0v5H0z" fill="#b5b5b5" /></Ico>
          </Corner>
          {columns.map(([n], i) => (
            <ColHead key={i} scope="col">{n}</ColHead>
          ))}
        </tr>
      </thead>
      <tbody>
        {rows.map((n) => {
          const values = cellsOf(n);
          const line = n >= 13 && n <= 25 ? "#a0a0a0" : n === 11 ? "#e8e8e8" : "#d4d4d4";
          const height = heightOf(n);
          const tight = height === 11;
          return (
            <tr key={n}>
              <RowHead scope="row" $h={height} $tight={tight}>{n}</RowHead>
              {columns.map(([name], i) => {
                if (n === 12)
                  return (
                    <Cell key={i} $kind="head" $line="#a5a5a5" $fill="#a5a5a5" $tight={tight}>
                      <HeadInner $top={name === "I"}>
                        {i === 0 ? <span>{heads[0]}</span> : <a href="#race">{heads[i]}</a>}
                        {name && (
                          <FilterBtn aria-label={`Filter column ${name}`}><Tri dir="d" c="#555" s={9} /></FilterBtn>
                        )}
                      </HeadInner>
                    </Cell>
                  );
                const v = values[i] ?? "";
                const marked = n === 19 || n === 20;
                const fill = marked && i === 0 ? "#f8e9e9" : marked && i <= 2 ? "#e7eff9" : undefined;
                const kind: CellKind =
                  i === 0 && (n === 1 || n === 11) ? "title" : n === 11 || !/^[\d.:]+%?$/.test(v) ? "left" : "right";
                return (
                  <Cell key={i} $kind={kind} $line={line} $fill={fill} $tight={tight}>{v}</Cell>
                );
              })}
            </tr>
          );
        })}
      </tbody>
    </Sheet>
  );
}

/* overlays that float above the cells */
const Overlay = styled.svg`
  position: absolute;
  left: 0;
  top: 0;
  pointer-events: none;
`;
const Floating = styled.div<{ $x: number; $y: number }>`
  position: absolute;
  left: ${(p) => p.$x}px;
  top: ${(p) => p.$y}px;
`;
const ChartTools = styled(Floating)`
  display: grid;
  gap: 10px;
  button {
    display: grid;
    place-items: center;
    width: 28px;
    height: 28px;
    border: 1px solid #666;
    background: #fff;
  }
`;

function RangeMarks() {
  const boxes: [string, number, string][] = [
    ["M291 293.500H531V315.500H291", 531, "#2f6ac4"],
    ["M24 293.500H288V315.500H24z", 288, "#c0343f"],
  ];
  return (
    <Overlay width="540" height="330">
      {boxes.map(([d, , c]) => (
        <g key={c} fill="none">
          <path d={d} stroke="#fff" strokeWidth="3" />
          <path d={d} stroke={c} strokeWidth="2" />
        </g>
      ))}
      {boxes.map(([, x, c]) =>
        [293.5, 315.5].map((y) => (
          <rect key={c + y} x={x - 2.5} y={y - 2.5} width="5" height="5" fill={c} stroke="#fff" />
        ))
      )}
    </Overlay>
  );
}

function BackChart() {
  const cols = Array.from({ length: 20 }, (_, i) => Math.round(29 + i * 62.35));
  const minor = Array.from({ length: 50 }, (_, i) => 27 + i * 7.44);
  const labels: [number, number, string][] = [
    [92, 344, "00:21:21"], [216, 341, "00:21:48"], [278, 334, "00:22:46"], [341, 340, "00:21:52"], [465, 346, "00:21:11"],
  ];
  return (
    <Floating $x={28} $y={374}>
      <svg width="1227" height="420" fontFamily="Open Sans" fill="none" role="img" aria-label="Victoria Park 5K Analysis">
        <path d="M0 0h1226.500v420H0z" fill="#fff" />
        <path d="M0 .5h1225.500V420" stroke="#d4d4d4" />
        {minor.map((y, i) => (
          <path key={i} d={`M29 ${Math.round(y)}.5H1214`} stroke={i % 5 ? "#f0f0f0" : "#d9d9d9"} />
        ))}
        {cols.map((x) => (
          <path key={x} d={`M${x}.5 27V420`} stroke="#d9d9d9" />
        ))}
        <text x="600" y="15" fontSize="9" fill="#595959">5K</text>
        <text x="642" y="15" fontSize="9" fill="#595959">Analysis</text>
        <path d="M29 334L466 348" stroke="#8fb0de" strokeDasharray="1 1.500" />
        <path d="M29 330L92 353L154 317L217 349L279 342L341 349L403 335L466 354" stroke="#4472c4" strokeWidth="2" />
        <path d="M205 325l12 5 22-4 77 0 25 5 40-5" stroke="#ed7d31" strokeWidth="2" />
        <g fontSize="6" fill="#404040" textAnchor="middle">
          {labels.map(([x, y, t]) => (
            <text key={t} x={x} y={y}>{t}</text>
          ))}
          <text x="12" y="364">00:20:00</text>
        </g>
      </svg>
    </Floating>
  );
}

function FrontChart() {
  const axis = ["01:04:48", "00:57:36", "00:50:24", "00:43:12", "00:36:00", "00:28:48", "00:21:36", "00:14:24", "00:07:12", "00:00:00"];
  const knobs: [number, number][] = [[6, 6], [305, 6], [604, 6], [6, 170], [604, 170], [6, 334], [305, 334], [604, 334]];
  return (
    <Floating $x={22} $y={367}>
      <svg width="612" height="342" fontFamily="Open Sans" fill="none" role="img" aria-label="Chart Title">
        <path d="M6.500 5.500h598v329h-598z" fill="#fff" stroke="#666" strokeWidth="1.500" />
        <text x="305" y="21" fontSize="9" fill="#595959" textAnchor="middle">Chart Title</text>
        {axis.map((t, i) => {
          const y = Math.round(32 + i * 29.8);
          return (
            <g key={t}>
              <path d={`M40 ${y}.5H596`} stroke="#d9d9d9" />
              <text x="34" y={y + 2} fontSize="6" fill="#404040" textAnchor="end">{t}</text>
            </g>
          );
        })}
        <path d="M180 46L459 52" stroke="#ed7d31" strokeWidth="2" />
        <path d="M180 177L459 178" stroke="#4472c4" strokeWidth="2" />
        <g fontSize="6" fill="#404040">
          <text x="178" y="311">1</text>
          <text x="456" y="311">2</text>
          <text x="285" y="326">Median</text>
          <text x="328" y="326">Mean</text>
        </g>
        <path d="M269 324h15" stroke="#4472c4" strokeWidth="2" />
        <path d="M312 324h15" stroke="#ed7d31" strokeWidth="2" />
        {knobs.map(([x, y]) => (
          <circle key={`${x}-${y}`} cx={x} cy={y} r="4.500" fill="#fff" stroke="#666" strokeWidth="2" />
        ))}
      </svg>
    </Floating>
  );
}

const ScrollV = styled.div`
  display: flex;
  flex-direction: column;
  width: 15px;
  margin: 4px 3px 0 4px;
  background: #dadada;
`;
const ScrollBtn = styled.button`
  display: grid;
  place-items: center;
  width: 15px;
  height: 15px;
  flex: none;
  border: 1px solid #777;
  background: #fff;
`;
const ThumbV = styled.div`
  height: 67%;
  border: 1px solid #777;
  background: #fff;
`;
const TabsBar = styled.div`
  display: flex;
  align-items: center;
  flex: none;
  height: 28px;
  margin-top: -1px;
  padding: 0 22px 0 14px;
  position: relative;
`;
const NavBtn = styled.button<{ $w: number }>`
  display: grid;
  place-items: center;
  width: ${(p) => p.$w}px;
  height: 24px;
  color: ${green};
  font-size: 13px;
  font-weight: 700;
`;
const SheetTab = styled.button<{ $on?: boolean }>`
  align-self: flex-start;
  height: ${(p) => (p.$on ? 25 : 20)}px;
  margin-top: ${(p) => (p.$on ? 0 : 4)}px;
  padding: 0 11px;
  font-size: 12px;
  border-right: 1px solid #9b9b9b;
  ${(p) =>
    p.$on &&
    css`
      padding: 0 9px;
      background: #fff;
      border-left: 1px solid #9b9b9b;
      border-bottom: 2px solid ${green};
      color: ${green};
      font-size: 13px;
      font-weight: 700;
    `}
`;
const ScrollH = styled.div`
  display: flex;
  width: 769px;
  height: 15px;
  background: #dadada;
`;
const ThumbH = styled.div`
  width: 236px;
  border: 1px solid #777;
  background: #fff;
`;

/* ---------- format pane ---------- */
const Pane = styled.aside`
  width: 285px;
  flex: none;
  margin: 4px 0 2px;
  padding: 9px 13px 0 13px;
  border-left: 1px solid #c0bebc;
`;
const PaneTitle = styled.div`
  display: flex;
  align-items: center;
  height: 31px;
  padding-right: 5px;
  h2 {
    flex: 1;
    margin: 0;
    font-size: 20px;
    font-weight: 300;
    color: #0e5c2f;
  }
  button {
    margin-left: 31px;
  }
`;
const PaneTabs = styled.div`
  display: flex;
  align-items: center;
  height: 32px;
  padding-left: 5px;
  color: #222;
  button {
    display: flex;
    align-items: center;
    gap: 6px;
  }
  button + button {
    margin-left: 10px;
    padding-left: 5px;
    border-left: 1px solid #dcdcdc;
  }
`;
const PaneIcons = styled.div`
  display: flex;
  gap: 10px;
  height: 30px;
  margin-top: 3px;
  padding-left: 2px;
  button {
    display: grid;
    place-items: center;
    width: 30px;
    height: 30px;
  }
  button:last-child {
    background: #ababab;
  }
`;
const PaneRule = styled.div`
  height: 15px;
  margin-bottom: 1px;
  padding: 7px 0 0 90px;
  border-bottom: 1px solid #c0bebc;
  svg {
    background: #e6e6e6;
  }
`;
const Fold = styled.button`
  display: flex;
  align-items: center;
  gap: 8px;
  height: 26px;
  padding-left: 8px;
  font-size: 12px;
  font-weight: 600;
`;

/* ---------- status bar ---------- */
const Status = styled.footer`
  display: flex;
  align-items: center;
  flex: none;
  height: 22px;
  padding: 0 8px 0 7px;
  border-top: 1px solid #c8c6c4;
  background: #f3f2f1;
`;
const ViewBtn = styled.button<{ $on?: boolean }>`
  display: grid;
  place-items: center;
  width: 40px;
  height: 21px;
  background: ${(p) => (p.$on ? "#d2d0ce" : "transparent")};
`;
const ZoomRange = styled.input`
  appearance: none;
  width: 100px;
  height: 14px;
  margin: 0 5px;
  background:
    linear-gradient(#555, #555) 50% 50% / 1px 7px no-repeat,
    linear-gradient(#666, #666) 50% 50% / 100% 1px no-repeat;
  &::-webkit-slider-thumb {
    appearance: none;
    width: 5px;
    height: 11px;
    background: #666;
  }
`;
const ZoomValue = styled.button`
  width: 34px;
  text-align: right;
`;

/* ---------- taskbar ---------- */
const Taskbar = styled.nav`
  display: flex;
  align-items: stretch;
  flex: none;
  height: 40px;
  padding-right: 7px;
  color: #fff;
  background: linear-gradient(90deg, #3a0c1b 0, #33060f 22%, #361205 34%, #3c1f16 45%, #3b1208 58%, #330b04 68%, #140b0a 74%, #0c1414 79%, #032f35 84%, #03282c 100%);
`;
const StartBtn = styled.button`
  display: grid;
  place-items: center;
  width: 48px;
`;
const TaskSearch = styled.label`
  display: flex;
  align-items: center;
  width: 344px;
  padding: 0 14px 0 9px;
  background: #f2f2f2;
  color: #222;
  gap: 10px;
  input {
    flex: 1;
    min-width: 0;
    border: 0;
    padding: 0;
    background: transparent;
    font-size: 14px;
    &::placeholder {
      color: #333;
      opacity: 1;
    }
  }
`;
const Apps = styled.div`
  display: grid;
  grid-template-columns: repeat(11, 38fr) repeat(17, 37fr);
  flex: 1;
`;
const AppBtn = styled.button<{ $run?: boolean; $on?: boolean }>`
  display: grid;
  place-items: center;
  background: ${(p) => (p.$on ? "rgba(255,255,255,.24)" : "transparent")};
  box-shadow: ${(p) => (p.$run ? "inset 0 -2px #76b9ed" : "none")};
  margin: 0 ${(p) => (p.$on ? 1 : 4)}px;
`;
const TaskItem = styled.button<{ $w: number }>`
  display: grid;
  place-items: center;
  width: ${(p) => p.$w}px;
`;
const Scroller = styled.div`
  display: flex;
  flex-direction: column;
  align-items: center;
  justify-content: space-between;
  width: 17px;
  padding: 5px 0;
  background: #f0f0f0;
`;
const Clock = styled.button`
  width: 74px;
  line-height: 18px;
`;

const AppIco = ({ children }: { children: React.ReactNode }) => (
  <Ico w={26} h={26} box="1 1 26 26">{children}</Ico>
);
const Office = () => (
  <AppIco>
    <path d="M7 8l9-5 0 4-5 2v9l-4 3z" fill="#c8321f" />
    <path d="M16 3l6 2v18l-6 2z" fill="#ef5a14" />
    <path d="M7 21l9 0v4z" fill="#e03c14" />
  </AppIco>
);
const Lettered = ({ l, c, light, dark }: { l: string; c: string; light: string; dark: string }) => (
  <AppIco>
    <path d="M8 2h18v12H8z" fill={light} />
    <path d="M8 2h9v6H8z" fill={c} />
    <path d="M8 14h18v12H8z" fill={c} />
    <path d="M8 20h18v6H8z" fill={dark} />
    <path d="M2 7h13v14H2z" fill={dark} />
    <text x="8.500" y="18.500" fontSize="12" fontWeight="700" fill="#fff" textAnchor="middle" fontFamily="Open Sans">{l}</text>
  </AppIco>
);
const Disc = ({ c, d }: { c: string; d: string }) => (
  <AppIco>
    <circle cx="13" cy="13" r="11" fill={c} />
    <path d="M13 2a11 11 0 0 1 11 11h-5a6 6 0 0 0-6-6z" fill={d} />
    <path d="M2 13a11 11 0 0 0 6 10l3-5a5 5 0 0 1-3-5z" fill="#4a6b58" />
    <circle cx="13" cy="13" r="6" fill="#6b3f22" />
    <circle cx="13" cy="13" r="3" fill="#fff" />
    <path d="M24 15v12H14z" fill="#19dbe6" />
    <path d="M21.500 20v5h-3.500z" stroke="#0a5a60" fill="none" />
  </AppIco>
);
const Help = ({ badge }: { badge?: boolean }) => (
  <AppIco>
    <circle cx="14" cy="14" r="11" fill="#1199d6" stroke="#fff" strokeWidth="2" />
    <text x="14" y="20.500" fontSize="18" fontWeight="700" fill="#fff" textAnchor="middle" fontFamily="Open Sans">?</text>
    {badge && (
      <>
        <circle cx="21.500" cy="21" r="5.500" fill="#f5a81c" />
        <path d="M21.500 17.500v1.500M21.500 20.500v4" stroke="#fff" strokeWidth="1.500" />
      </>
    )}
  </AppIco>
);

const apps: { name: string; run?: boolean; on?: boolean; icon: React.ReactNode }[] = [
  { name: "Store", icon: (
    <AppIco>
      <path d="M9 8V3h10v5" stroke="#eee" strokeWidth="1.500" />
      <path d="M3 8h22v18H3z" fill="#f0f0f0" />
      <path d="M9.500 12h4v4h-4z" fill="#f25022" /><path d="M14.500 12h4v4h-4z" fill="#7fba00" />
      <path d="M9.500 17h4v4h-4z" fill="#00a4ef" /><path d="M14.500 17h4v4h-4z" fill="#ffb900" />
    </AppIco>) },
  { name: "Edge", icon: (
    <AppIco>
      <path d="M4 13C4 6 9 3 14 3c6 0 10 4 10 10v3H11c0 4 6 6 11 3v4c-6 4-17 3-17-6 0-3 2-6 5-7-4 0-5 2-6 3zM11 12h7c0-5-7-5-7 0z" fill="#0f7fdb" fillRule="evenodd" />
    </AppIco>) },
  { name: "File Explorer", icon: (
    <AppIco>
      <path d="M4 4h8l2 2h11v18H4z" fill="#f7d774" /><path d="M4 9h21v15H4z" fill="#fde79b" />
      <path d="M8 25v-7h13v7h-3v-4h-7v4z" fill="#39a9dc" />
    </AppIco>) },
  { name: "Amazon", icon: (
    <AppIco>
      <path d="M2 2h24v24H2z" fill="#fff" />
      <text x="14" y="18" fontSize="18" fontWeight="700" fill="#221f1f" textAnchor="middle" fontFamily="Open Sans">a</text>
      <path d="M7 20c4 3 10 3 14 0M19 19.500h2.500V22" stroke="#f79a1d" strokeWidth="1.500" />
    </AppIco>) },
  { name: "Bolt", icon: (
    <AppIco>
      <path d="M18 3L9 13l4 3 3-3-2-2 4-3z" fill="#35bdf5" /><path d="M18 12l-4-1-1 4 3 1-6 9 10-9z" fill="#1a8fe0" />
    </AppIco>) },
  { name: "Mail", icon: (
    <AppIco>
      <path d="M2 9l12-7 12 7v15H2z" fill="#1674c4" /><path d="M2 10h24v14H2z" fill="#3aa7ea" /><path d="M4 9h20l-10 7z" fill="#fff" />
      <rect x="4" y="13.500" width="23" height="13" rx="6.500" fill="#3a3a3a" stroke="#aaa" />
      <text x="15.500" y="24" fontSize="10" fontWeight="600" fill="#fff" textAnchor="middle" fontFamily="Open Sans">99+</text>
    </AppIco>) },
  { name: "Grammarly", icon: (
    <AppIco>
      <circle cx="14" cy="14" r="12" fill="#15c39a" />
      <path d="M19.500 10a7 7 0 1 0 1 5h-4M20.500 15v5" stroke="#fff" strokeWidth="2" />
    </AppIco>) },
  { name: "Office", icon: <Office /> },
  { name: "Camera", icon: (
    <AppIco>
      <path d="M2 6h24v17H2z" fill="#77808a" /><path d="M9 3h10l2 3H7z" fill="#929aa3" /><path d="M3 4h4v2H3z" fill="#35b0e8" />
      <circle cx="14" cy="14.500" r="6.500" fill="#eee" /><circle cx="14" cy="14.500" r="4.500" fill="#8d8ce8" />
    </AppIco>) },
  { name: "Internet Explorer", icon: (
    <AppIco>
      <path d="M4 15c0-7 5-11 10-11s9 4 9 12H11c0 4 5 5 7 2h5c-3 9-19 8-19-3zM11 12h7c0-4-7-4-7 0z" fill="#4fc3f7" fillRule="evenodd" />
      <path d="M24 8c1-7-9-4-15 3S1 25 7 24" stroke="#f6c21c" strokeWidth="2" />
    </AppIco>) },
  { name: "Excel", run: true, on: true, icon: <Lettered l="X" c="#21a366" light="#33c481" dark="#107c41" /> },
  { name: "PowerPoint", run: true, icon: (
    <AppIco>
      <circle cx="15" cy="14" r="12" fill="#ed6c47" /><path d="M15 2a12 12 0 0 1 12 12H15z" fill="#ff8f6b" />
      <path d="M27 14a12 12 0 0 1-24 0z" fill="#d35230" /><path d="M2 7h13v14H2z" fill="#c43e1c" />
      <text x="8.500" y="18.500" fontSize="12" fontWeight="700" fill="#fff" textAnchor="middle" fontFamily="Open Sans">P</text>
    </AppIco>) },
  { name: "Chrome", run: true, icon: (
    <AppIco>
      <circle cx="14" cy="14" r="12" fill="#fbbc05" /><path d="M14 14L3.600 8A12 12 0 0 1 24.400 8z" fill="#ea4335" />
      <path d="M3.600 8A12 12 0 0 0 14 26l5-9-5-3z" fill="#34a853" />
      <circle cx="14" cy="14" r="5.800" fill="#fff" /><circle cx="14" cy="14" r="4.500" fill="#4285f4" />
    </AppIco>) },
  { name: "Word", icon: <Lettered l="W" c="#2b7cd3" light="#41a5ee" dark="#185abd" /> },
  { name: "Snipping Tool", icon: (
    <AppIco>
      <ellipse cx="13" cy="11" rx="11" ry="8" fill="#e8e8e8" transform="rotate(-25 13 11)" />
      <path d="M4 12C6 5 17 1 22 5" stroke="#d33a3a" strokeWidth="2.500" /><path d="M14 8l6 12M19 9l-4 10" stroke="#777" strokeWidth="1.500" />
      <circle cx="15" cy="22" r="2.500" stroke="#2a86c8" strokeWidth="2" /><circle cx="22" cy="21" r="2.500" stroke="#2a86c8" strokeWidth="2" />
    </AppIco>) },
  { name: "Maps", icon: (
    <AppIco>
      <path d="M14 1c12 0 12 12 6 18l-6 8-6-8C2 13 2 1 14 1z" fill="#e0430f" /><circle cx="14" cy="11" r="4.500" fill="#fff" />
    </AppIco>) },
  { name: "Map viewer", icon: <Disc c="#a3744c" d="#d8b48c" /> },
  { name: "Map editor", icon: <Disc c="#2c9aa0" d="#7bc04a" /> },
  { name: "Settings", icon: (
    <AppIco>
      <circle cx="14" cy="14" r="5.500" stroke="#fff" strokeWidth="2.500" />
      <circle cx="14" cy="14" r="7.700" stroke="#fff" strokeWidth="2.500" strokeDasharray="3 3.050" />
    </AppIco>) },
  { name: "Teams", icon: (
    <AppIco>
      <circle cx="16" cy="5" r="3.500" fill="#7b83eb" /><circle cx="23" cy="7" r="2.500" fill="#5059c9" />
      <path d="M10 10h12v10c0 8-12 8-12 0z" fill="#7b83eb" /><path d="M22 10h5v8c0 3-3 4-5 3z" fill="#5059c9" />
      <path d="M2 8h13v13H2z" fill="#4b53bc" />
      <text x="8.500" y="18.500" fontSize="11" fontWeight="700" fill="#fff" textAnchor="middle" fontFamily="Open Sans">T</text>
    </AppIco>) },
  { name: "Office hub", icon: <Office /> },
  { name: "Photos", icon: (
    <AppIco>
      <path d="M3 2h22v24H3z" fill="#2ea3e8" /><path d="M3 20l8-9 14 15H3z" fill="#14508f" /><path d="M15 16l3-3 7 7v6z" fill="#3f86cf" /><circle cx="18" cy="8" r="2" fill="#fff" />
    </AppIco>) },
  { name: "Calendar", icon: (
    <AppIco>
      <path d="M3 4h22v22H3z" fill="#1b93dc" /><path d="M3 4h22v6H3z" fill="#1272bd" /><path d="M7 1v6M14 1v6M21 1v6" stroke="#5cc4f5" strokeWidth="1.500" />
      <path d="M10 13.500h11M7 17.500h14M7 21.500h10" stroke="#fff" strokeWidth="2" strokeDasharray="2 2" />
    </AppIco>) },
  { name: "Zoom", run: true, icon: (
    <AppIco>
      <rect x="3" y="2" width="23" height="24" rx="8" fill="#4a8cff" /><rect x="7" y="10" width="9" height="8" rx="2" fill="#fff" /><path d="M17 13l4-3v8l-4-3z" fill="#fff" />
    </AppIco>) },
  { name: "Get Help", icon: <Help /> },
  { name: "Firefox", icon: (
    <AppIco>
      <path d="M14 5c2-1 3-2 3-4 3 2 4 4 5 6l2-1c3 6 4 20-10 20C3 26 0 15 4 6l3 2c2-2 4-2 7-3z" fill="#ff8a16" />
      <path d="M4 7c-3 9 0 19 10 19 8 0 11-6 11-11-3 8-13 8-17 2z" fill="#f4364f" /><circle cx="14" cy="14" r="5" fill="#8a4fe0" />
      <path d="M17 1c3 2 4 4 5 6 3 5 2 8 1 10-1-5-7-5-6-16z" fill="#ffcf32" />
    </AppIco>) },
  { name: "People", icon: (
    <AppIco>
      <g stroke="#fff" strokeWidth="1.300">
        <circle cx="7" cy="11" r="2.800" /><circle cx="14" cy="10" r="3.200" /><circle cx="21.500" cy="12.500" r="2.200" />
        <path d="M3 20c0-8 7-8 7 0M10 20c0-9 8-9 8 0M18.500 20c0-7 6.500-7 6.500 0" />
      </g>
    </AppIco>) },
  { name: "Groups", icon: (
    <AppIco>
      <circle cx="7" cy="8" r="4" fill="#1683cf" /><circle cx="21" cy="8" r="4" fill="#1683cf" />
      <path d="M2 26V16c0-3 6-3 6-3h12s6 0 6 3v10z" fill="#1a78c2" /><circle cx="14" cy="7.500" r="4.500" fill="#46b8f2" /><path d="M8 26V16c0-4 12-4 12 0v10z" fill="#3aa9ea" />
    </AppIco>) },
];

export default function App() {
  return (
    <Window>
      <Global />
      <TitleBar>
        <TitleArt aria-hidden="true">
          <Ico w={460} h={34}>
            <g stroke="#1d613c" strokeWidth="4">
              <path d="M4 0v16M11 0v24M18 0v32M25 0v22M32 0v12" />
              <path d="M52 0l8 8M59 0v10M66 0v20" strokeWidth="2" />
              <path d="M111 0v34M116 0v34M121 0v34M128 0v30M135 0v26M142 0v20" strokeWidth="2" />
              <circle cx="224" cy="20" r="14" strokeWidth="7" />
              <path d="M256 6l40 40M264 0l40 40M274 0l36 36M290 0l30 30" strokeWidth="3" />
              <path d="M272 0c4 46 100 46 104 0" strokeWidth="10" />
              <path d="M385 34l34-34M394 34l34-34M403 34l34-34M412 34l34-34" strokeWidth="3" />
              <path d="M440 0l20 20M428 0l32 32M450 0l10 10" strokeWidth="3" />
            </g>
            <path d="M158 0h28c-4 16-24 16-28 0z" fill="#1d613c" />
            <circle cx="224" cy="20" r="5" fill="#1d613c" />
          </Ico>
        </TitleArt>
        <TitleLeft>
          <AutoSave>
            AutoSave
            <HiddenCheck type="checkbox" defaultChecked />
            <Toggle>On</Toggle>
          </AutoSave>
          <QuickBtn $w={17} aria-label="Save">
            <Ico w={17} h={17}>
              <path d="M7 15.500H3L1 13.500v-12h14.500v5M4 1.500v5h8v-5M5 15v-4h3" stroke="#fff" strokeWidth="1.200" />
              <path d="M9 11.500c1-3 5-3 6.500-1M16 8v3h-3M16 13c-1 3-5 3-6.500 1M9 16.500v-3h3" stroke="#fff" strokeWidth="1.200" />
            </Ico>
          </QuickBtn>
          <QuickBtn $w={40} aria-label="Undo">
            <Ico w={16} h={17}><path d="M1.500 1v6.500H8M2 7C6 0 14 1 14 7c0 4-4 5-7 9" stroke="#fff" strokeWidth="1.300" /></Ico>
          </QuickBtn>
          <QuickBtn $w={6} aria-label="Undo history"><Chev c="#fff" w={8} /></QuickBtn>
          <QuickBtn $w={36} aria-label="Redo">
            <Ico w={16} h={17}><path d="M14.500 1v6.500H8M14 7C10 0 2 1 2 7c0 4 4 5 7 9" stroke="#4f9470" strokeWidth="1.300" /></Ico>
          </QuickBtn>
          <QuickBtn $w={6} aria-label="Redo history"><Chev c="#4f9470" w={8} /></QuickBtn>
          <QuickBtn $w={31} aria-label="Customize toolbar">
            <Ico w={8} h={8}><path d="M0 1h8" stroke="#fff" strokeWidth="1.200" /><path d="M1 4h6L4 7z" stroke="#fff" /></Ico>
          </QuickBtn>
          <DocName>
            RunThrough Events Analysis • Saved
            <Ico w={11} h={8}><path d="M1 1.500L5.500 6 10 1.500" stroke="#fff" strokeWidth="1.400" /></Ico>
          </DocName>
        </TitleLeft>
        <SearchBox>
          <Ico w={16} h={16}>
            <circle cx="10" cy="6" r="5" stroke="#0c4a26" /><path d="M6.500 9.500L1 15" stroke="#0c4a26" strokeWidth="1.200" />
          </Ico>
          <SearchInput placeholder="Search (Alt+Q)" aria-label="Search" />
        </SearchBox>
        <TitleRight>
          Joshua Headlam Charles
          <Avatar>JH</Avatar>
          <QuickBtn $w={40} aria-label="What's new">
            <Ico w={17} h={17}>
              <path d="M1 15L9 4l4 4-10 8zM9 4l1-2 5 5-2 1M3 13l2 3 3-2M11 1l1-1M14 3l2-2M15 6h2" stroke="#fff" strokeWidth="1.200" />
            </Ico>
          </QuickBtn>
          <QuickBtn $w={53} aria-label="Ribbon display options">
            <Ico w={13} h={11}><path d="M.5.500h12v10H.5zM.5 2.500h12M6.500 9V4.500M4.500 6.500l2-2 2 2" stroke="#fff" /></Ico>
          </QuickBtn>
          <QuickBtn $w={41} aria-label="Minimize"><Ico w={10} h={4}><path d="M0 1.500h10" stroke="#fff" /></Ico></QuickBtn>
          <QuickBtn $w={49} aria-label="Restore">
            <Ico w={11} h={11}><path d="M.5 2.500h8v8h-8zM3 2.500V.5h7.500V8H8.500" stroke="#fff" /></Ico>
          </QuickBtn>
          <QuickBtn $w={45} aria-label="Close">
            <Ico w={11} h={11}><path d="M.5.500l10 10M10.500.500l-10 10" stroke="#fff" strokeWidth="1.200" /></Ico>
          </QuickBtn>
        </TitleRight>
      </TitleBar>

      <RibbonBar />

      <FormulaRow>
        <NameBox>
          <input defaultValue="Chart 14" aria-label="Name box" />
          <Tri dir="d" c="#777" />
        </NameBox>
        <Dots $w={30}><Ico w={2} h={12}><path d="M1 0v12" stroke="#aaa" strokeWidth="2" strokeDasharray="2 3" /></Ico></Dots>
        <FxBox>
          <button aria-label="Cancel"><Ico w={11} h={11}><path d="M1 1l9 9M10 1l-9 9" stroke="#b9b9b9" strokeWidth="1.600" /></Ico></button>
          <button aria-label="Enter"><Ico w={13} h={11}><path d="M1 6l3.500 4L12 1" stroke="#b9b9b9" strokeWidth="1.800" /></Ico></button>
          <button aria-label="Insert function">fx</button>
        </FxBox>
        <FormulaField>
          <textarea aria-label="Formula" />
          <button aria-label="Collapse formula bar">
            <Ico w={8} h={6}><path d="M1 5l3-3 3 3" stroke="#666" strokeWidth="2" /></Ico>
          </button>
        </FormulaField>
      </FormulaRow>

      <Work>
        <SheetSide>
          <SheetRow>
            <GridView>
              <SheetTable />
              <RangeMarks />
              <BackChart />
              <FrontChart />
              <ChartTools $x={640} $y={372}>
                <button aria-label="Chart elements">
                  <Ico w={22} h={22}><path d="M11 1v20M1 11h20" stroke="#2fa04c" strokeWidth="1.300" /></Ico>
                </button>
                <button aria-label="Chart styles">
                  <Ico w={22} h={22}>
                    <path d="M20 1c2 1 1 3 0 4l-8 11-3-3L18 3z" fill="#fff" stroke="#555" />
                    <path d="M9 13c-3 0-4 2-4 4s-2 3-4 3c4 2 10 1 11-4z" fill="#7db8ea" stroke="#1a6ab5" />
                  </Ico>
                </button>
                <button aria-label="Chart filters">
                  <Ico w={22} h={22}><path d="M1 1h20v2l-8 8v10H9V11L1 3z" stroke="#444" strokeWidth="1.200" /></Ico>
                </button>
              </ChartTools>
            </GridView>
            <ScrollV>
              <ScrollBtn aria-label="Scroll up"><Tri dir="u" /></ScrollBtn>
              <ThumbV />
              <Spacer />
              <ScrollBtn aria-label="Scroll down"><Tri dir="d" /></ScrollBtn>
            </ScrollV>
          </SheetRow>
          <TabsBar>
            <NavBtn $w={30} aria-label="Previous sheet"><Tri dir="l" c="#0e5c2f" /></NavBtn>
            <NavBtn $w={26} aria-label="Next sheet"><Tri dir="r" c="#c0bebc" /></NavBtn>
            <NavBtn $w={30} aria-label="More sheets">...</NavBtn>
            <SheetTab $on>1 (1-3) Victoria Park 5K,10K,HM</SheetTab>
            <SheetTab>2</SheetTab>
            <SheetTab>3</SheetTab>
            <NavBtn $w={82} aria-label="New sheet">
              <Ico w={17} h={17}><circle cx="8.500" cy="8.500" r="7.500" stroke="#777" /><path d="M8.500 4.500v8M4.500 8.500h8" stroke="#777" strokeWidth="1.600" /></Ico>
            </NavBtn>
            <Spacer />
            <Dots $w={32}><Ico w={2} h={12}><path d="M1 0v12" stroke="#aaa" strokeWidth="2" strokeDasharray="2 3" /></Ico></Dots>
            <ScrollH>
              <ScrollBtn aria-label="Scroll left"><Tri dir="l" /></ScrollBtn>
              <ThumbH />
              <Spacer />
              <ScrollBtn aria-label="Scroll right"><Tri dir="r" /></ScrollBtn>
            </ScrollH>
          </TabsBar>
        </SheetSide>

        <Pane>
          <PaneTitle>
            <h2>Format Chart Area</h2>
            <button aria-label="Pane options"><Tri dir="d" s={11} /></button>
            <button aria-label="Close pane"><Ico w={11} h={11}><path d="M1 1l9 9M10 1l-9 9" stroke="#666" strokeWidth="1.800" /></Ico></button>
          </PaneTitle>
          <PaneTabs>
            <button>
              <b>Chart Options</b>
              <Ico w={11} h={8}><path d="M1 1.500L5.500 6.500 10 1.500" stroke="#2c8fd0" strokeWidth="1.500" /></Ico>
            </button>
            <button>Text Options</button>
          </PaneTabs>
          <PaneIcons>
            <button aria-label="Fill and line">
              <Ico w={24} h={24}>
                <path d="M2 12L11 3l8 9-9 9z" fill="#fff" stroke="#777" strokeWidth="1.300" />
                <path d="M9 8V3c0-3 4-3 4 0v6" stroke="#777" strokeWidth="1.300" /><path d="M14 5c6 1 9 6 7 16-1-3-1-7-4-10z" fill="#777" />
              </Ico>
            </button>
            <button aria-label="Effects">
              <Ico w={22} h={24}>
                <path d="M11 1l9 7-4 10H6L2 8z" fill="#fff" stroke="#777" strokeWidth="1.300" />
                <path d="M6 20h10l1 3.500H5z" fill="#f8f8f8" stroke="#ccc" />
              </Ico>
            </button>
            <button aria-label="Size and properties">
              <Ico w={22} h={22}>
                <path d="M6 7h15v15H6z" fill={green} /><path d="M7 .500v5M21 .500v5M7 3h14M0 7.500h5M0 21.500h5M2.500 7.500v14" stroke={green} strokeWidth="1.300" />
                <path d="M13.500 9v3.500M13.500 16.500V20M8 14.500h3.500M15.500 14.500H19M12.500 10.500l1-1 1 1M12.500 18.500l1 1 1-1M9.500 13.500l-1 1 1 1M17.500 13.500l1 1-1 1" stroke="#fff" />
              </Ico>
            </button>
          </PaneIcons>
          <PaneRule><Ico w={14} h={8}><path d="M0 8l7-7.500L14 8" stroke="#c0bebc" /></Ico></PaneRule>
          <Fold><Ico w={6} h={9}><path d="M1 .500v8l4-4z" fill="#fff" stroke="#888" /></Ico>Size</Fold>
          <Fold><Ico w={6} h={9}><path d="M1 .500v8l4-4z" fill="#fff" stroke="#888" /></Ico>Properties</Fold>
        </Pane>
      </Work>

      <Status>
        Ready
        <Spacer />
        <ViewBtn $on aria-label="Normal view">
          <Ico w={14} h={13}><path d="M.5.500h13v12H.5zM.5 4.500h13M.5 8.500h13M5 .500v12M9 .500v12" stroke="#444" /></Ico>
        </ViewBtn>
        <ViewBtn aria-label="Page layout view">
          <Ico w={14} h={13}><path d="M.5.500h13v12H.5zM3.500 2.500h7v8h-7zM5 4.500h4M5 6.500h4M5 8.500h4" stroke="#444" /></Ico>
        </ViewBtn>
        <ViewBtn aria-label="Page break view">
          <Ico w={14} h={13}><path d="M.5.500h13v12H.5zM4.500.500v7M8.500.500v7H.5" stroke="#444" /></Ico>
        </ViewBtn>
        <QuickBtn $w={14} aria-label="Zoom out"><Ico w={8} h={8}><path d="M0 4.500h8" stroke="#444" /></Ico></QuickBtn>
        <ZoomRange type="range" min={10} max={190} defaultValue={55} aria-label="Zoom" />
        <QuickBtn $w={8} aria-label="Zoom in"><Ico w={8} h={8}><path d="M0 4.500h8M4.500 0v8" stroke="#444" /></Ico></QuickBtn>
        <ZoomValue>55%</ZoomValue>
      </Status>

      <Taskbar>
        <StartBtn aria-label="Start">
          <Ico w={16} h={16}><path d="M0 2.300L6.800 1.400v6.200H0zM7.600 1.200L16 0v7.600H7.600zM0 8.400h6.800v6.200L0 13.700zM7.600 8.400H16V16l-8.400-1.200z" fill="#fff" /></Ico>
        </StartBtn>
        <TaskSearch>
          <Ico w={21} h={21}><circle cx="10.500" cy="10.500" r="9" stroke="#111" strokeWidth="2.500" /></Ico>
          <input placeholder="Type here to search" aria-label="Type here to search" />
          <Ico w={13} h={17}>
            <rect x="4" y="1" width="5" height="10" rx="2" fill="#222" /><path d="M1.500 7v4.500c0 2 10 2 10 0V7M6.500 13v3M3.500 16.200h6" stroke="#222" strokeWidth="1.200" />
          </Ico>
        </TaskSearch>
        <TaskItem $w={48} aria-label="Task view">
          <Ico w={17} h={16}><path d="M2 1v2.500h9V1M2 15v-2.500h9V15M1 5.500h11v5H1zM15.500 0v4M15.500 9v7" stroke="#fff" strokeWidth="1.200" /><path d="M14 5h3v3h-3z" fill="#fff" /></Ico>
        </TaskItem>
        <TaskItem as="span" $w={21}><Ico w={3} h={16}><path d="M.5 0v16M2.500 0v16" stroke="#6d4852" /></Ico></TaskItem>
        <Apps>
          {apps.map((a) => (
            <AppBtn key={a.name} $run={a.run} $on={a.on} aria-label={a.name}>{a.icon}</AppBtn>
          ))}
        </Apps>
        <Scroller>
          <Ico w={9} h={7}><path d="M1 5.500l3.500-4L8 5.500" stroke="#555" strokeWidth="1.600" /></Ico>
          <Ico w={9} h={7}><path d="M1 1.500l3.500 4L8 1.500" stroke="#555" strokeWidth="1.600" /></Ico>
        </Scroller>
        <TaskItem $w={46} aria-label="Help"><Help badge /></TaskItem>
        <TaskItem $w={38} aria-label="Meet now">
          <Ico w={16} h={18}><g stroke="#fff" strokeWidth="1.200"><circle cx="10.500" cy="4" r="3" /><circle cx="4.500" cy="9" r="2.800" /><path d="M1 17c0-7 7-7 7 0M7.500 10c2-4 7-3 7.500 2" /></g></Ico>
        </TaskItem>
        <TaskItem $w={28} aria-label="Show hidden icons"><Ico w={12} h={8}><path d="M1 7l5-5.500L11 7" stroke="#fff" strokeWidth="1.400" /></Ico></TaskItem>
        <TaskItem $w={24} aria-label="Sync">
          <Ico w={16} h={16}><circle cx="8" cy="8" r="5.500" stroke="#6a6af0" strokeWidth="4" strokeDasharray="1.700 1.180" /><circle cx="8" cy="8" r="4" stroke="#6a6af0" strokeWidth="2" /></Ico>
        </TaskItem>
        <TaskItem $w={24} aria-label="OneDrive">
          <Ico w={17} h={16}><path d="M4 11a4 4 0 0 1 0-7c2-3 7-3 8 1 4 0 4 6 0 6z" fill="#1b7fd6" /><circle cx="12" cy="11" r="4.500" fill="#fff" /><path d="M9.500 11a2.500 2.500 0 0 1 4-2M14.500 11a2.500 2.500 0 0 1-4 2" stroke="#1b7fd6" /></Ico>
        </TaskItem>
        <TaskItem $w={24} aria-label="OneDrive error">
          <Ico w={17} h={16}><path d="M4 11a4 4 0 0 1 0-7c2-3 7-3 8 1 4 0 4 6 0 6z" fill="#b8b8b8" /><circle cx="12" cy="11" r="4.500" fill="#d9232e" /><path d="M10 9l4 4M14 9l-4 4" stroke="#fff" strokeWidth="1.200" /></Ico>
        </TaskItem>
        <TaskItem $w={24} aria-label="Network">
          <Ico w={14} h={14}><path d="M1 13C1 6 6 1.500 13 1.500M4 13c0-5 4-8 9-8M7 13c0-3 3-5 6-5" stroke="#ddd" strokeWidth="1.200" /><path d="M9 13c0-2 2-3 4-3v3z" fill="#fff" /></Ico>
        </TaskItem>
        <TaskItem $w={24} aria-label="Update">
          <Ico w={17} h={17}><path d="M1 3l13-2v14L1 13z" stroke="#fff" strokeWidth="1.200" /><path d="M4.500 7c1-3 5-3 6 0M11 4v3H8.500" stroke="#fff" /><circle cx="12" cy="12" r="4.500" fill="#d9232e" /><path d="M12 9v3.500M12 13.500V15" stroke="#fff" strokeWidth="1.300" /></Ico>
        </TaskItem>
        <TaskItem $w={34} aria-label="Input language">ENG</TaskItem>
        <Clock>19:03<br />11/08/2022</Clock>
        <TaskItem $w={44} aria-label="Notifications">
          <Ico w={26} h={26}>
            <path d="M1 2h16v13H8l-4 4v-4H1z" fill="#fff" /><path d="M4 5.500h10M4 8.500h10M4 11.500h6" stroke="#111" />
            <circle cx="16" cy="16.500" r="9" fill="#2f3638" stroke="#777" />
            <text x="16" y="20.500" fontSize="11" fontWeight="600" fill="#fff" textAnchor="middle" fontFamily="Open Sans">18</text>
          </Ico>
        </TaskItem>
      </Taskbar>
    </Window>
  );
}
